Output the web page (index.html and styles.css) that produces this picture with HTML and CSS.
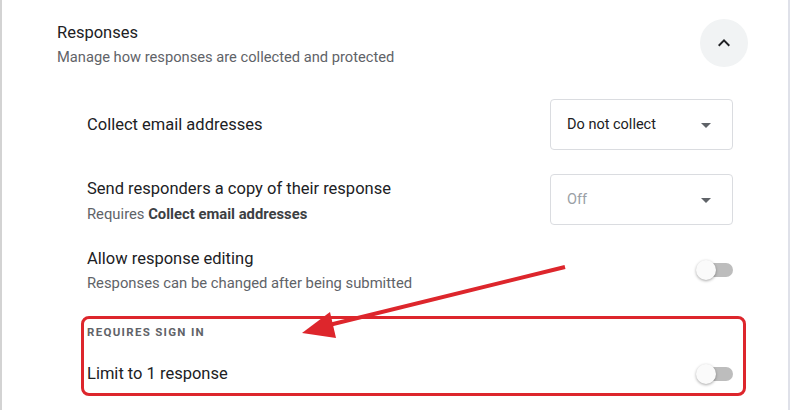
FILE: index.html
```html
<!DOCTYPE html>
<html>
<head>
<meta charset="utf-8">
<link rel="stylesheet" href="styles.css">
</head>
<body>
<div class="card">
  <div class="header">
    <div class="header-text">
      <div class="title">Responses</div>
      <div class="subtitle">Manage how responses are collected and protected</div>
    </div>
    <div class="collapse-btn">
      <svg width="24" height="24" viewBox="0 0 24 24"><path d="M7.41 15.41L12 10.83l4.59 4.58L18 14l-6-6-6 6z" fill="#202124"/></svg>
    </div>
  </div>

  <div class="settings">
    <div class="row row-email">
      <div class="row-text"><div class="row-title">Collect email addresses</div></div>
      <div class="select">
        <span class="select-value">Do not collect</span>
        <svg width="24" height="24" viewBox="0 0 24 24"><path d="M7 10l5 5 5-5z" fill="#5f6368"/></svg>
      </div>
    </div>

    <div class="row row-copy">
      <div class="row-text">
        <div class="row-title">Send responders a copy of their response</div>
        <div class="row-sub">Requires <b>Collect email addresses</b></div>
      </div>
      <div class="select disabled">
        <span class="select-value">Off</span>
        <svg width="24" height="24" viewBox="0 0 24 24"><path d="M7 10l5 5 5-5z" fill="#5f6368"/></svg>
      </div>
    </div>

    <div class="row row-edit">
      <div class="row-text">
        <div class="row-title">Allow response editing</div>
        <div class="row-sub">Responses can be changed after being submitted</div>
      </div>
      <div class="toggle"><span class="knob"></span></div>
    </div>

    <div class="section-label">REQUIRES SIGN IN</div>

    <div class="row row-limit">
      <div class="row-text"><div class="row-title">Limit to 1 response</div></div>
      <div class="toggle"><span class="knob"></span></div>
    </div>
  </div>

  <div class="annot-box"></div>
  <svg class="annot-arrow" width="791" height="410" viewBox="0 0 791 410">
    <line x1="565" y1="267" x2="325" y2="326" stroke="#dd262c" stroke-width="4"/>
    <polygon points="302,333 330,312 336,338" fill="#dd262c"/>
  </svg>
</div>
</body>
</html>
```

FILE: styles.css
```css
html, body {
  margin: 0;
  padding: 0;
  background: #ffffff;
}

body {
  font-family: Roboto, "Noto Sans", Arial, sans-serif;
  color: #202124;
  width: 791px;
  height: 410px;
  overflow: hidden;
}

.card {
  position: relative;
  box-sizing: border-box;
  width: 790px;
  height: 410px;
  border-left: 2px solid #d3d3d3;
  border-right: 2px solid #dfe1e9;
  background: #fff;
  padding: 19px 40px 0 55px;
}

.header {
  display: flex;
  justify-content: space-between;
  align-items: flex-start;
}

.header-text {
  padding-top: 2px;
}

.title {
  font-size: 16.5px;
  line-height: 24px;
  color: #202124;
}

.subtitle {
  font-size: 14.7px;
  line-height: 20px;
  margin-top: 2px;
  color: #5f6368;
}

.collapse-btn {
  width: 48px;
  height: 48px;
  border-radius: 50%;
  background: #f1f3f4;
  display: flex;
  align-items: center;
  justify-content: center;
}

.settings {
  padding-left: 30px;
  padding-right: 15px;
}

.row {
  display: flex;
  justify-content: space-between;
}

.row-email {
  margin-top: 32px;
  align-items: center;
}

.row-copy {
  margin-top: 24px;
  align-items: flex-start;
}

.row-copy .row-text {
  padding-top: 3px;
}

.row-copy .row-sub {
  margin-top: 3px;
}

.row-edit {
  margin-top: 22px;
  align-items: center;
}

.row-limit {
  margin-top: 22px;
  align-items: center;
}

.row-title {
  font-size: 16.5px;
  line-height: 24px;
  color: #202124;
}

.row-sub {
  font-size: 14.8px;
  line-height: 20px;
  margin-top: 2px;
  color: #5f6368;
}

.row-sub b {
  font-weight: 700;
  color: #3c4043;
}

.select {
  box-sizing: border-box;
  width: 183px;
  height: 51px;
  border: 1px solid #dadce0;
  border-radius: 4px;
  display: flex;
  align-items: center;
  justify-content: space-between;
  padding: 0 14px 0 16px;
}

.select-value {
  font-size: 14.5px;
  color: #202124;
  font-weight: 400;
}

.select.disabled .select-value {
  color: #9aa0a6;
}

.toggle {
  position: relative;
  width: 36px;
  height: 14px;
  border-radius: 7px;
  background: #bdbdbd;
}

.knob {
  position: absolute;
  left: -1px;
  top: -3px;
  width: 20px;
  height: 20px;
  border-radius: 50%;
  background: #fafafa;
  box-shadow: 0 1px 3px rgba(0,0,0,0.35);
}

.section-label {
  margin-top: 31px;
  font-size: 11.5px;
  line-height: 16px;
  font-weight: 700;
  letter-spacing: 1.3px;
  color: #5f6368;
}

.annot-box {
  position: absolute;
  left: 79px;
  top: 316px;
  width: 659px;
  height: 74px;
  border: 3px solid #dd262c;
  border-radius: 8px;
}

.annot-arrow {
  position: absolute;
  left: -2px;
  top: 0;
  pointer-events: none;
}
```
